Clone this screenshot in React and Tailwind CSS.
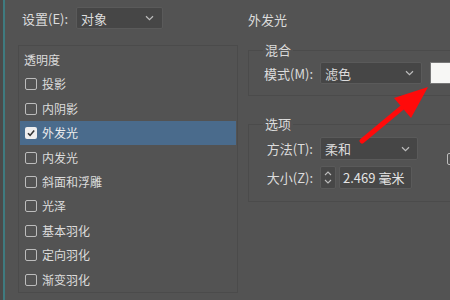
import React from "react";

function Chevron() {
  return (
    <svg width="9" height="6" viewBox="0 0 9 6" className="shrink-0">
      <path d="M1 1.2 L4.5 4.6 L8 1.2" fill="none" stroke="#bdbdbd" strokeWidth="1.2" />
    </svg>
  );
}

function Checkbox({ checked }) {
  return checked ? (
    <div className="w-[12px] h-[12px] rounded-[2px] bg-[#eeeeee] flex items-center justify-center shrink-0">
      <svg width="10" height="10" viewBox="0 0 10 10">
        <path d="M2 5.2 L4.1 7.4 L8.2 2.6" fill="none" stroke="#333" strokeWidth="1.6" />
      </svg>
    </div>
  ) : (
    <div className="w-[12px] h-[12px] rounded-[2px] border border-[#bcbcbc] shrink-0" />
  );
}

const items = ["投影", "内阴影", "外发光", "内发光", "斜面和浮雕", "光泽", "基本羽化", "定向羽化", "渐变羽化"];

export default function App() {
  return (
    <div className="w-[450px] h-[300px] bg-[#535353] flex overflow-hidden relative font-['Noto_Sans_CJK_SC',sans-serif] text-[#dcdcdc]">
      <div className="w-[3px] bg-[#4a4a4a] shrink-0" />
      <div className="w-[2px] bg-[#3f7b80] shrink-0" />
      {/* Left column */}
      <div className="w-[233px] pl-[13px] shrink-0 flex flex-col">
        <div className="h-[45px] pt-[7px] flex items-start">
          <div className="h-[22px] flex items-center pl-[4px] text-[13px] leading-none w-[58px]">设置(E):</div>
          <div className="w-[87px] h-[22px] bg-[#464646] border border-[#5a5a5a] rounded-[2px] flex items-center justify-between pl-[4px] pr-[8px] text-[13px] leading-none">
            <span>对象</span>
            <Chevron />
          </div>
        </div>
        <div className="w-[220px] h-[248px] border border-[#4b4b4b] pt-[1.75px] px-[1px] flex flex-col">
          <div className="h-[24.5px] flex items-center pl-[4px] text-[12px] leading-none">透明度</div>
          {items.map((t) => {
            const sel = t === "外发光";
            return (
              <div
                key={t}
                className={
                  sel
                    ? "h-[24.5px] flex items-center pl-[5px] gap-[5px] text-[12px] leading-none bg-[#4a6b8c] text-[#ececec]"
                    : "h-[24.5px] flex items-center pl-[5px] gap-[5px] text-[12px] leading-none"
                }
              >
                <Checkbox checked={sel} />
                <span>{t}</span>
              </div>
            );
          })}
        </div>
      </div>
      {/* Right column */}
      <div className="ml-[10px] w-[240px] shrink-0 flex flex-col">
        <div className="h-[41px] pt-[11px] text-[13px] leading-[18px]">外发光</div>
        <fieldset className="w-[236px] border border-[#4b4b4b] pl-[8px] pb-[11px]">
          <legend className="ml-[6px] px-[2px] text-[13px] leading-[18px]">混合</legend>
          <div className="mt-[3px] flex items-center h-[22px]">
            <div className="w-[56px] text-right text-[13px] leading-none">模式(M):</div>
            <div className="ml-[7px] w-[102px] h-[22px] bg-[#464646] border border-[#5a5a5a] rounded-[2px] flex items-center justify-between pl-[4px] pr-[7px] text-[13px] leading-none">
              <span>滤色</span>
              <Chevron />
            </div>
            <div className="ml-[8px] w-[30px] h-[22px] bg-[#f7f7f5] border border-[#777]" />
          </div>
        </fieldset>
        <fieldset className="mt-[19px] w-[236px] border border-[#4b4b4b] pl-[8px] pb-[12px]">
          <legend className="ml-[6px] px-[2px] text-[13px] leading-[18px]">选项</legend>
          <div className="mt-[4px] flex items-center h-[23px]">
            <div className="w-[56px] text-right text-[13px] leading-none">方法(T):</div>
            <div className="ml-[7px] w-[98px] h-[23px] bg-[#464646] border border-[#5a5a5a] rounded-[2px] flex items-center justify-between pl-[4px] pr-[7px] text-[13px] leading-none">
              <span>柔和</span>
              <Chevron />
            </div>
          </div>
          <div className="mt-[6px] flex items-center h-[23px]">
            <div className="w-[56px] text-right text-[13px] leading-none">大小(Z):</div>
            <div className="ml-[7px] w-[16px] h-[23px] bg-[#474747] border border-[#5a5a5a] rounded-[2px] flex flex-col items-center justify-center gap-[3px]">
              <svg width="8" height="5" viewBox="0 0 8 5">
                <path d="M1 4 L4 1 L7 4" fill="none" stroke="#bdbdbd" strokeWidth="1.1" />
              </svg>
              <svg width="8" height="5" viewBox="0 0 8 5">
                <path d="M1 1 L4 4 L7 1" fill="none" stroke="#bdbdbd" strokeWidth="1.1" />
              </svg>
            </div>
            <div className="ml-[3px] w-[73px] h-[23px] bg-[#474747] border border-[#5a5a5a] rounded-[2px] flex items-center pl-[3px] text-[13px] leading-none text-[#e4e4e4]">
              2.469 毫米
            </div>
          </div>
        </fieldset>
      </div>
      {/* partially visible checkbox at right edge */}
      <div className="absolute left-[447px] top-[153px] w-[12px] h-[12px] border border-[#bcbcbc] rounded-[2px]" />
      {/* red arrow annotation */}
      <svg className="absolute left-0 top-0 pointer-events-none" width="450" height="300" viewBox="0 0 450 300">
        <line x1="362" y1="141" x2="404" y2="106" stroke="#ff0a0a" strokeWidth="5" strokeLinecap="round" />
        <polygon points="428,87 394,98 411,118" fill="#ff0a0a" />
      </svg>
    </div>
  );
}
